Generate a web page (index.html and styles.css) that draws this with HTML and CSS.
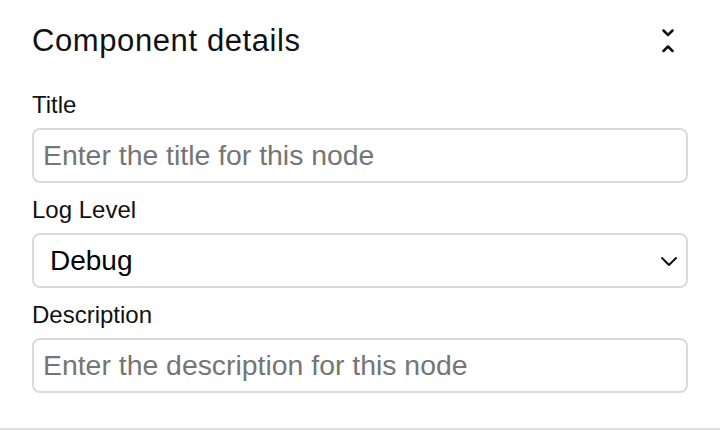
FILE: index.html
```html
<!DOCTYPE html>
<html>
<head>
<meta charset="utf-8">
<link rel="stylesheet" href="styles.css">
</head>
<body>
<div class="panel">
  <div class="header">
    <h2 class="heading">Component details</h2>
    <button class="collapse" type="button" aria-label="Collapse">
      <svg width="12" height="26" viewBox="0 0 12 26" fill="none" stroke="#111" stroke-width="2.5" stroke-linecap="round" stroke-linejoin="round">
        <path d="M1.5 2.5 L6 7 L10.5 2.5"/>
        <path d="M1.5 23 L6 18.5 L10.5 23"/>
      </svg>
    </button>
  </div>
  <div class="field">
    <label class="label">Title</label>
    <input class="control" type="text" placeholder="Enter the title for this node">
  </div>
  <div class="field">
    <label class="label">Log Level</label>
    <div class="select">
      <span class="select-value">Debug</span>
      <svg class="select-arrow" width="18" height="12" viewBox="0 0 18 12" fill="none" stroke="#111" stroke-width="2" stroke-linecap="round" stroke-linejoin="round">
        <path d="M2 3 L9 10 L16 3"/>
      </svg>
    </div>
  </div>
  <div class="field">
    <label class="label">Description</label>
    <input class="control" type="text" placeholder="Enter the description for this node">
  </div>
</div>
</body>
</html>
```

FILE: styles.css
```css
* { box-sizing: border-box; }
html, body { margin: 0; padding: 0; background: #fff; }
body { font-family: "Liberation Sans", Arial, sans-serif; color: #111; }

.panel {
  width: 720px;
  height: 430px;
  padding: 22px 32px 0;
  border-bottom: 2px solid #dedede;
}

.header {
  display: flex;
  align-items: center;
  justify-content: space-between;
  height: 38px;
  margin-bottom: 31px;
}

.heading {
  margin: 0;
  font-size: 31px;
  line-height: 38px;
  letter-spacing: 0.6px;
  font-weight: 400;
  color: #111;
}

.collapse {
  border: 0;
  background: none;
  padding: 0;
  margin-right: 14px;
  width: 12px;
  height: 26px;
  display: flex;
}

.field {
  display: flex;
  flex-direction: column;
  margin-bottom: 13px;
}

.label {
  font-size: 24px;
  line-height: 28px;
  margin-bottom: 9px;
  color: #111;
}

.control {
  height: 55px;
  border: 2px solid #dadada;
  border-radius: 8px;
  padding: 0 9px;
  font-family: "Liberation Sans", Arial, sans-serif;
  font-size: 28.4px;
  color: #111;
  outline: none;
  background: #fff;
}
.control::placeholder { color: #757575; }

.select {
  height: 55px;
  border: 2px solid #dadada;
  border-radius: 8px;
  padding: 0 8px 0 16px;
  display: flex;
  align-items: center;
  justify-content: space-between;
}
.select-value { font-size: 28px; color: #000; }
.select-arrow { display: block; }
```
